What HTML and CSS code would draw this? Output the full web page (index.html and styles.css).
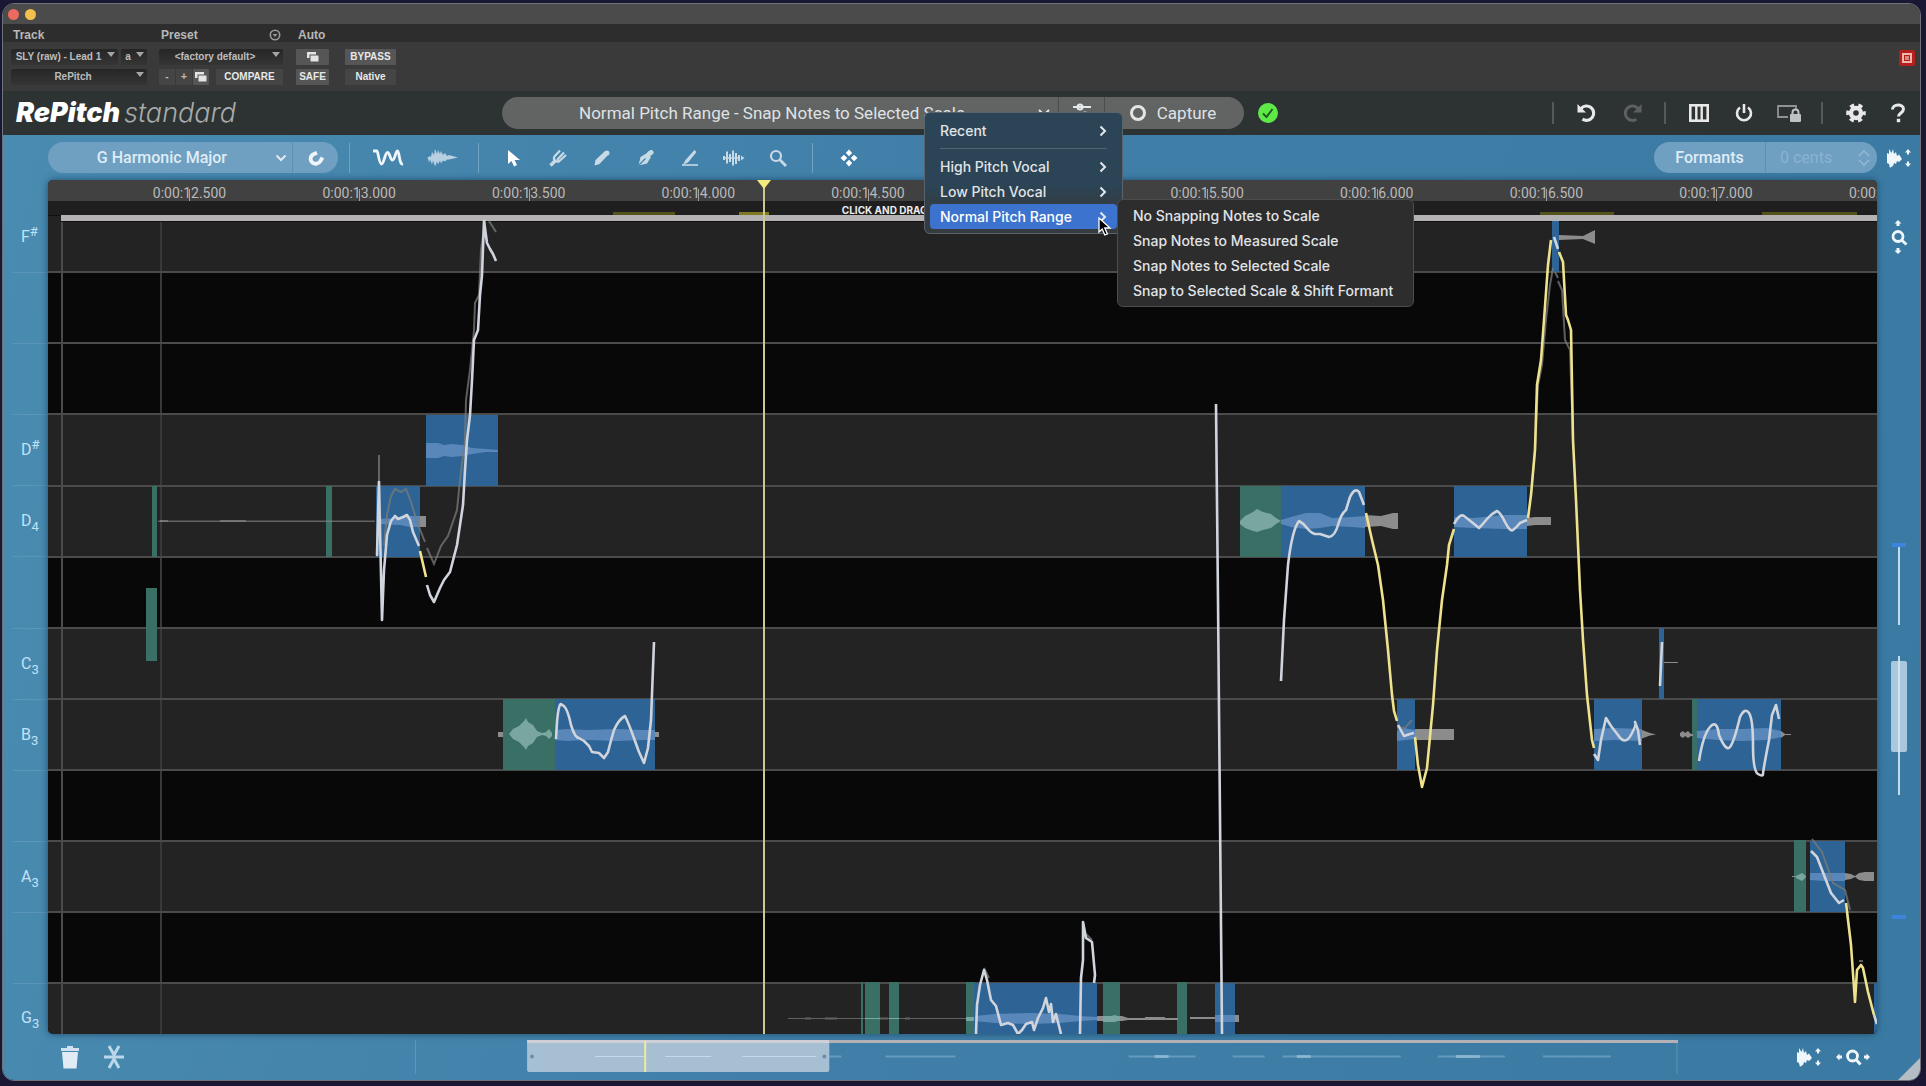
FILE: index.html
```html
<!DOCTYPE html>
<html lang="en">
<head>
<meta charset="utf-8">
<title>RePitch standard</title>
<link rel="stylesheet" href="styles.css">
</head>
<body>
<div class="window">
  <div class="titlebar"><span class="light light-close"></span><span class="light light-min"></span></div>

  <header class="host">
    <section class="host-group host-track">
      <h2>Track</h2>
      <div class="host-row">
        <button class="drop grow">SLY (raw) - Lead 1</button>
        <button class="drop slot">a</button>
      </div>
      <div class="host-row"><button class="drop grow">RePitch</button></div>
    </section>
    <section class="host-group host-preset">
      <h2>Preset
        <svg class="ring" width="12" height="12" viewBox="0 0 12 12"><circle cx="6" cy="6" r="4.7" fill="none" stroke="#9a9a9a" stroke-width="1.6"/><path d="M3.6 5h4.8L6 8z" fill="#9a9a9a"/></svg>
      </h2>
      <div class="host-row"><button class="drop grow">&lt;factory default&gt;</button></div>
      <div class="host-row tight">
        <button class="key">-</button><button class="key">+</button>
        <button class="key lit" aria-label="Copy"><svg width="14" height="12" viewBox="0 0 14 12"><rect x="1" y="1" width="9" height="6" fill="#e4e4e4"/><rect x="4" y="4" width="9" height="7" fill="#e4e4e4" stroke="#555" /></svg></button>
        <button class="key compare">COMPARE</button>
      </div>
    </section>
    <section class="host-group host-auto">
      <h2>Auto</h2>
      <div class="host-row">
        <button class="key lit auto-key" aria-label="Automation"><svg width="14" height="12" viewBox="0 0 14 12"><rect x="1" y="1" width="9" height="6" fill="#e4e4e4"/><rect x="4" y="4" width="9" height="7" fill="#e4e4e4" stroke="#555"/></svg></button>
        <button class="key lit wide-key">BYPASS</button>
      </div>
      <div class="host-row">
        <button class="key lit auto-key">SAFE</button>
        <button class="key wide-key">Native</button>
      </div>
    </section>
    <button class="target" aria-label="Target"><svg width="18" height="18" viewBox="0 0 18 18"><rect x="1" y="1" width="16" height="16" rx="2" fill="#b5201c"/><rect x="4" y="4" width="10" height="10" fill="#f1b5ae"/><rect x="6.500" y="6.500" width="5" height="5" fill="#d9867e" stroke="#b5201c"/></svg></button>
  </header>

  <div class="brandbar">
    <h1 class="logo"><b>RePitch</b> <span>standard</span></h1>
    <div class="preset-pill">
      <button class="preset-name">Normal Pitch Range - Snap Notes to Selected Scale
        <svg class="preset-chev" width="12" height="8" viewBox="0 0 12 8"><path d="M1 1l5 5 5-5" class="ln"/></svg></button>
      <button class="preset-adjust" aria-label="Adjust"><svg width="20" height="20" viewBox="0 0 20 20"><path d="M1 4h18M1 12h18" class="ln"/><circle cx="8" cy="4" r="2.500" fill="#666" class="ln"/><circle cx="13" cy="12" r="2.500" fill="#666" class="ln"/></svg></button>
      <button class="capture"><svg width="18" height="18" viewBox="0 0 18 18"><circle cx="9" cy="9" r="6.500" fill="none" stroke="#e4e4e4" stroke-width="3"/></svg>Capture</button>
    </div>
    <svg class="ok" width="20" height="20" viewBox="0 0 20 20"><circle cx="10" cy="10" r="10" fill="#5fe947"/><path d="M5 10.500l3.500 3.500 6-8" fill="none" stroke="#1d5a22" stroke-width="2"/></svg>
    <div class="brand-tools">
      <span class="bar"></span>
      <button aria-label="Undo"><svg width="22" height="22" viewBox="0 0 22 22"><path d="M5 6.500A7.200 7.200 0 1 1 6.500 17.200" fill="none" stroke="#e8e8e8" stroke-width="3.200"/><path d="M1.500 2v8.500H10z" fill="#e8e8e8"/></svg></button>
      <button aria-label="Redo"><svg width="22" height="22" viewBox="0 0 22 22"><path d="M17 6.500A7.200 7.200 0 1 0 15.500 17.200" fill="none" stroke="#5c6061" stroke-width="3"/><path d="M20.500 2v8.500H12z" fill="#5c6061"/></svg></button>
      <span class="bar"></span>
      <button aria-label="Columns"><svg width="20" height="18" viewBox="0 0 20 18"><rect x="1.300" y="1.300" width="17.400" height="15.400" fill="none" stroke="#e8e8e8" stroke-width="2.600"/><path d="M7.300 1v16M12.700 1v16" stroke="#e8e8e8" stroke-width="2.400"/></svg></button>
      <button aria-label="Power"><svg width="20" height="20" viewBox="0 0 20 20"><path d="M6 4.500A7 7 0 1 0 14 4.500" fill="none" stroke="#e8e8e8" stroke-width="2.600"/><path d="M10 1v9" stroke="#e8e8e8" stroke-width="2.600"/></svg></button>
      <button aria-label="Lock view"><svg width="26" height="20" viewBox="0 0 26 20"><path d="M12 14H2V3h18v4" fill="none" stroke="#8f9394" stroke-width="1.800"/><rect x="14" y="11" width="11" height="8" rx="1" fill="#bfc2c3"/><path d="M16.500 11V9.500a3 3 0 0 1 6 0V11" fill="none" stroke="#bfc2c3" stroke-width="2"/></svg></button>
      <span class="bar"></span>
      <button aria-label="Settings"><svg width="20" height="20" viewBox="0 0 20 20"><circle cx="10" cy="10" r="5" fill="none" stroke="#e8e8e8" stroke-width="4.400"/><circle cx="10" cy="10" r="8" fill="none" stroke="#e8e8e8" stroke-width="3.600" stroke-dasharray="4.200 4.180" stroke-dashoffset="2.100"/></svg></button>
      <button class="help" aria-label="Help"><svg width="16" height="20" viewBox="0 0 16 20"><path d="M2.500 6.500C2.500 0.500 13.500 0.500 13.500 6c0 4-5 3.800-5 7.500" fill="none" stroke="#e8e8e8" stroke-width="3"/><rect x="6.800" y="15.800" width="3.400" height="3.400" fill="#e8e8e8"/></svg></button>
    </div>
  </div>

  <main class="app">
    <div class="toolbar">
      <div class="scale-pill">
        <button class="scale-name"><span>G Harmonic Major</span><svg width="12" height="8" viewBox="0 0 12 8"><path d="M1.500 1.500L6 6l4.500-4.500" class="ln"/></svg></button>
        <button class="magnet" aria-label="Snap"><svg width="18" height="18" viewBox="0 0 18 18"><path d="M10 3.800L6.500 5.300C3 7 2.700 11.500 5.500 13.700c2.600 2 6.200 1 8-1.700L15.500 8.500" fill="none" stroke="#f0f5fa" stroke-width="3.800"/></svg></button>
      </div>
      <div class="views">
        <button aria-label="Pitch view"><svg width="32" height="20" viewBox="0 0 32 20"><path d="M1 3h4c1 0 2 13 4.500 13S13 4.500 15.500 4.500 18 12 20.500 12 23.500 3 25.500 3 27 17 31 16" fill="none" stroke="#f0f5fa" stroke-width="2.800"/></svg></button>
        <button aria-label="Waveform view"><svg class="soft" width="32" height="20" viewBox="0 0 32 20"><path d="M0 10l3-2 1 1 1-5 2 3 1-6 2 5 1-4 2 4 1-3 2 4 2-2 2 3 2-1 9 2.500 -9 2-2 0-2 2-2-1-2 3-1-3-2 4-1-3-2 5-2-6-1 4-2-5-1 3-1-4z" fill="#e6f0f8"/></svg></button>
      </div>
      <div class="tools">
        <button aria-label="Select"><svg width="18" height="20" viewBox="0 0 18 20"><path d="M3 2v14l3.500-3 2.500 5.500 3-1.400-2.400-5.100H15z" fill="#fff"/></svg></button>
        <button aria-label="Tuning fork"><svg class="soft" width="18" height="18" viewBox="0 0 18 18"><path d="M1.500 16.500L6 12" stroke="#fff" stroke-width="3.400"/><path d="M11 1.500L5.500 7.500c-2 3 2 6.500 5 4.500L17 6M8 11l7-7.500" fill="none" stroke="#fff" stroke-width="2.200"/></svg></button>
        <button aria-label="Pencil"><svg class="soft" width="18" height="18" viewBox="0 0 18 18"><path d="M1.500 16.500l1-5.500L12 2l3.500 3.500-9 9.500z" fill="#fff"/><circle cx="14" cy="4" r="2.500" fill="#fff"/></svg></button>
        <button aria-label="Pen"><svg class="soft" width="18" height="18" viewBox="0 0 18 18"><path d="M1.500 16.500L3.500 8 10 4l4 4-4 6.500z" fill="#fff"/><path d="M12.500 4.500l1.500-1" stroke="#fff" stroke-width="5" stroke-linecap="round"/><path d="M1.500 16.500L8.500 9.500" stroke="#4384aa" stroke-width="1.200"/></svg></button>
        <button aria-label="Knife"><svg class="soft" width="18" height="18" viewBox="0 0 18 18"><path d="M13.500 1L4.500 11l-2.500 4.500 5-2L15.500 3z" fill="#fff"/><path d="M1 16h16" stroke="#fff" stroke-width="1.600"/></svg></button>
        <button aria-label="Stretch"><svg class="soft" width="22" height="18" viewBox="0 0 22 18"><path d="M1 7v4M4 2.500v12M7 5v8M10 1.500v15M13 4v11M16 6v6" stroke="#fff" stroke-width="2"/><path d="M1 9h16" stroke="#fff" stroke-width="1.500"/><path d="M18 6.500v5l3.500-2.500z" fill="#fff"/></svg></button>
        <button aria-label="Zoom"><svg class="soft" width="18" height="18" viewBox="0 0 18 18"><circle cx="7" cy="7" r="5" fill="none" stroke="#fff" stroke-width="2.200"/><path d="M10.800 10.800L17 17" stroke="#fff" stroke-width="2.800"/></svg></button>
      </div>
      <div class="tools-extra">
        <button aria-label="Nudge"><svg width="18" height="18" viewBox="0 0 18 18"><path d="M9 0.500L12.200 4 9 7.200 5.800 4zM9 17.500L12.200 14 9 10.800 5.800 14zM0.500 9L4 5.800 7.200 9 4 12.200zM17.500 9L14 5.800 10.800 9 14 12.200z" fill="#fff"/></svg></button>
      </div>
      <div class="formants">
        <button class="form-name">Formants</button>
        <label class="form-value"><input type="text" value="0 cents" aria-label="Formant shift" disabled><svg width="14" height="18" viewBox="0 0 14 18"><path d="M2 7l5-5 5 5M2 11l5 5 5-5" fill="none" stroke="#a9c6dc" stroke-opacity=".6" stroke-width="1.600"/></svg></label>
      </div>
      <button class="wave-zoom" aria-label="Waveform height"><svg width="26" height="20" viewBox="0 0 26 20"><path d="M1 5l2 1 0-5 2.500 4 1.500-4 1 5 2-2 1 4 2-1.500 3 4.500-3 3-2-1-1 3-2-1-1 3-2 1-1 1-1-4-2-1z" fill="#f0f7fc"/><path d="M22 1l3 3.500h-2v2h-2v-2h-2zM22 19l3-3.500h-2v-2h-2v2h-2z" fill="#f0f7fc"/></svg></button>
    </div>

    <div class="workspace">
      <ol class="keys">
        <li class="k-top"><span>F<sup>#</sup></span></li>
        <li></li><li></li>
        <li><span>D<sup>#</sup></span></li>
        <li><span>D<sub>4</sub></span></li>
        <li></li>
        <li><span>C<sub>3</sub></span></li>
        <li><span>B<sub>3</sub></span></li>
        <li></li>
        <li><span>A<sub>3</sub></span></li>
        <li></li>
        <li class="k-end"><span>G<sub>3</sub></span></li>
      </ol>

      <div class="editor">
        <div class="ruler">
          <time>0:00:12.500</time><time>0:00:13.000</time><time>0:00:13.500</time><time>0:00:14.000</time><time>0:00:14.500</time><time></time><time>0:00:15.500</time><time>0:00:16.000</time><time>0:00:16.500</time><time>0:00:17.000</time><time>0:00:17.500</time>
        </div>
        <div class="strip"><span>CLICK AND DRAG</span></div>
        <svg class="roll" viewBox="48 215 1829 819" preserveAspectRatio="none">
          <rect x="48" y="215" width="1829" height="819" fill="#232323"/>
          <g fill="#080808"><rect x="48" y="272" width="1829" height="142"/><rect x="48" y="557" width="1829" height="71"/><rect x="48" y="770" width="1829" height="71"/><rect x="48" y="912" width="1829" height="71"/></g>
          <path d="M161 221V1034" stroke="#393939" stroke-width="2"/>
          <path d="M48 272H1877M48 343H1877M48 414H1877M48 486H1877M48 557H1877M48 628H1877M48 699H1877M48 770H1877M48 841H1877M48 912H1877M48 983H1877" stroke="#4b4b4b" stroke-width="2"/>
          <path d="M62 221V1034" stroke="#4b4b4b" stroke-width="2"/>
          <path d="M48 215.500H62" stroke="#111" stroke-width="1"/>
          <rect x="61" y="214" width="1816" height="8" fill="#101010"/>
          <rect x="61" y="215" width="1816" height="6" fill="#b4b2b3"/>

          <g fill="#3a6f66">
            <rect x="152" y="486" width="5" height="71"/><rect x="326" y="486" width="6" height="71"/><rect x="146" y="588" width="11" height="73"/>
            <rect x="503" y="699" width="52" height="71"/><rect x="861" y="982" width="2" height="52"/><rect x="865" y="982" width="15" height="52"/><rect x="889" y="982" width="10" height="52"/><rect x="966" y="982" width="9" height="52"/><rect x="1103" y="982" width="17" height="52"/><rect x="1177" y="982" width="10" height="52"/>
            <rect x="1240" y="486" width="41" height="71"/><rect x="1692" y="699" width="5" height="71"/><rect x="1794" y="840" width="12" height="72"/>
          </g>
          <g fill="#2d6495">
            <rect x="376" y="486" width="44" height="71"/><rect x="426" y="415" width="72" height="71"/><rect x="555" y="699" width="100" height="71"/><rect x="974" y="983" width="123" height="51"/><rect x="1215" y="983" width="20" height="51"/>
            <rect x="1281" y="486" width="84" height="71"/><rect x="1454" y="486" width="73" height="71"/><rect x="1397" y="699" width="18" height="71"/><rect x="1594" y="699" width="48" height="71"/><rect x="1552" y="221" width="7" height="51"/><rect x="1659" y="628" width="5" height="71"/><rect x="1697" y="699" width="84" height="71"/><rect x="1810" y="841" width="35" height="71"/><rect x="1874" y="983" width="3" height="51"/>
          </g>

          <g fill="#8c8c8c">
            <path d="M158 520.500H375v1.500H158z" opacity=".6"/><path d="M160 520h8v2h-8zM220 520h26v2h-26z" opacity=".6"/>
            <path d="M420 516h6v11h-6zM498 732h5v5h-5zM655 732h4v5h-4z"/>
            <path d="M788 1018H974v1H788zM805 1017.500h6v2h-6zM825 1017.500h12v2h-12zM878 1017.500h10v2h-10zM905 1017.500h5v2h-5z" opacity=".6"/>
            <path d="M1097 1016h25l6 2h50v2h-50l-6 1h-25zM1145 1017h20v3h-20zM1190 1017h25v2h-25zM1235 1015h4v7h-4z"/>
            <path d="M1365 515l16 1 12-3h5v16h-5l-12-3-16 1zM1527 518l8-1h16v8h-16l-8 1zM1415 729h39v11h-39zM1559 235l24 1 12-6v14l-12-5-24 1zM1642 730l8 3 6 1.500-6 1-8 3zM1664 662h14v1h-14zM1680 733l3-2 2 2 3-2 3 3h2v2h-2l-3 2-3-2-2 2-3-2zM1781 731l4 3h6v1h-6l-4 3zM1792 876h4v1h-4zM1845 873l6 1 4 2 4-3 6-1h9v9h-9l-6-1-4-3-4 2-6 1z"/>
          </g>
          <g fill="#79a69f">
            <path d="M503 734h6l4-5 6-3 5-5 2-3 2 4 5 3 4 6 5 2 4-1 3-3 3 4v3l-3 3-3-3-4-1-5 2-4 6-5 3-2 4-2-3-5-5-6-3-4-5h-6z"/>
            <path d="M1240 521l5-5 8-4 4-3 6 3 8 2 5 4 5 3-5 3-5 4-8 2-6 2-4-1-8-3-5-4z"/>
            <path d="M1103 1016h8l4-1 5 2v3l-5 2h-12zM966 1017h8v4h-8zM865 1018h15v1h-15zM889 1018h10v1h-10zM1796 876l6-3 4 3v1l-4 4-6-3z"/>
          </g>
          <g fill="#5a87b9">
            <path d="M378 519l22-1 10-2h10v11h-10l-10-2-22-1z"/>
            <path d="M426 443h12l6 2 8-1 10 1 10 3 14 1 12 1v2l-12 0-14 2-10 2-10 1-8-1-6 2h-12z"/>
            <path d="M555 730l12-1 20 1 30-1 25 1h13v10h-13l-25 1-30-1-20 1-12-1z"/>
            <path d="M975 1016l20-2 35-1 30 1 20 2 17 1v3l-17 1-20 2-30 1-35-1-20-2zM1215 1015h20v7h-20z"/>
            <path d="M1281 520l10-3 15-4h14l12 5 20-1 13-1v12l-13-1-20-1-12 2-14 1-15-2-10-3z"/>
            <path d="M1454 517l20 1 30-3h23v14h-23l-30-1-20-1zM1397 731l6-3 12 2v9l-18 2zM1594 729l20-1 28 1v12l-28-1-20 1zM1697 731l20-2 25 0 25-1 14 3v6l-14 3-25 1-25-1-20-2zM1810 873l14 0 21 0v8h-21l-14-1z"/>
          </g>

          <g class="ghost">
            <path d="M379 455V482M384 545L387 515 391 496 395 489 401 492 406 489 411 502 417 522 425 542M427 548L434 564 441 546 448 536 457 510 460 480 465 440 466 400 470 370 474 330 475 303 479 295 481 250 485 221M489 221L496 232"/>
            <path d="M1531 495L1535 450 1538 385 1542 365 1546 320 1550 285 1553 268M1555 272L1558 278M1558 281L1562 290 1565 340 1570 350 1573 440M1397 727L1405 728 1412 720M1812 839L1822 852 1833 883 1845 890 1850 910M1859 961h4M984 968L989 978M1086 934L1092 940"/>
          </g>
          <g class="pitch">
            <path d="M379 481L377 555 379 482 382 620 384 570 387 535 391 521 395 516 398 519 403 517 407 515 410 520 413 532 416 539 419 546"/>
            <path d="M427 585L430 595 434 602 440 588 444 580 450 572 457 545 460 525 463 505 465 470 467 440 470 415 472 380 474 340 478 330 480 295 482 275 484 221 487 243 490 249 493 254 496 261"/>
            <path d="M556 739L557 722Q559 700 562 705Q567 706 571 725Q575 738 579 738L584 741 589 746 592 752 599 753 604 758 608 752Q611 740 614 730Q619 719 625 716Q629 724 635 741L639 752 644 763 648 748 651 720 654 642"/>
            <path d="M976 1034L977 1005 980 985 984 970 987 980 991 1000 996 1006 1001 1025 1008 1023 1013 1025 1018 1034 1022 1030 1026 1024 1032 1022 1034 1030 1038 1018 1043 1008 1046 998 1049 1012 1051 1004 1053 1022 1056 1014 1061 1034M1080 1034L1081 978 1083 960 1083 922 1086 938 1092 942 1095 975 1094 983"/>
            <path d="M1216 404L1218 600 1222 1034"/>
            <path d="M1281 681L1284 620 1288 565Q1292 530 1299 521Q1303 523 1307 528T1315 534L1320 534 1329 537Q1335 536 1338 525T1346 510L1350 497Q1355 487 1359 492L1364 505"/>
            <path d="M1398 725L1404 736 1410 734 1414 733M1454 524Q1460 513 1464 516T1479 528Q1483 524 1487 519T1497 511Q1500 512 1505 522T1513 530 1520 523L1527 520M1554 237L1558 249"/>
            <path d="M1594 754L1598 760 1601 740 1606 718 1611 726 1618 735Q1625 746 1631 735T1635 722L1638 730 1640 745M1662 642L1660 686"/>
            <path d="M1699 761Q1703 735 1710 727T1719 735Q1726 752 1730 747T1740 717Q1745 707 1749 713T1753 745 1758 774 1763 774 1769 740L1772 715 1776 705 1779 719"/>
            <path d="M1811 851L1817 857 1824 875 1831 893 1839 903 1844 900M1874 1015L1877 1024"/>
          </g>
          <g class="glide">
            <path d="M420 551L426 577M1366 513L1372 540 1378 565 1383 600 1388 650 1392 695 1394 711 1397 721M1415 737L1418 765 1422 787 1427 768 1433 705 1437 650 1442 600 1447 565 1449 545 1454 529M1528 518L1531 495 1535 450 1537 385 1541 360 1544 320 1548 265 1551 240M1559 252L1563 262 1566 315 1568 320 1571 330 1573 440 1576 500 1580 590 1583 640 1587 695 1592 740 1594 748M1846 903L1851 945 1855 1002 1857 970 1861 965 1863 968 1868 992 1874 1015"/>
          </g>
        </svg>
        <div class="playhead"></div>
      </div>

      <aside class="side">
        <button class="side-zoom" aria-label="Vertical zoom"><svg width="18" height="34" viewBox="0 0 18 34"><path d="M8 0l3.500 3.500h-2V6h-3V3.500h-2zM8 34l3.500-3.500h-2V28h-3v2.500h-2z" fill="#f0f7fc"/><circle cx="8" cy="16.500" r="5" fill="none" stroke="#f0f7fc" stroke-width="2.800"/><path d="M11.500 20l5 4.500" stroke="#f0f7fc" stroke-width="3"/></svg></button>
        <div class="track-a"></div>
        <div class="track-b"><span></span></div>
        <div class="mark"></div>
      </aside>
    </div>

    <footer class="bottom">
      <div class="bottom-left">
        <button aria-label="Delete"><svg width="20" height="24" viewBox="0 0 20 24"><path d="M7 1h6v2h6v3H1V3h6z" fill="#d3e2f0"/><path d="M2 7h16l-1.500 16.500h-13z" fill="#e1ebf6"/></svg></button>
        <button aria-label="Split"><svg width="20" height="24" viewBox="0 0 20 24"><path d="M0 12h20" stroke="#bcd6ea" stroke-width="3"/><path d="M5 1l5 9 5-9M5 23l5-9 5 9" fill="none" stroke="#bcd6ea" stroke-width="3"/></svg></button>
      </div>
      <div class="overview">
        <svg viewBox="415 1041 1262 34" preserveAspectRatio="none">
          <path d="M415.500 1041v34M1676 1041v34" stroke="#6ea2c2" stroke-opacity=".6"/>
          <rect x="829" y="1041" width="848" height="3" fill="#b3b1b6"/>
          <path d="M829 1057.500h12M885 1057.500h70M1128 1057.500h67M1232 1057.500h32M1282 1057.500h118M1437 1057.500h67M1542 1057.500h68" stroke="#7fadcb" stroke-opacity=".6" stroke-width="2"/>
          <path d="M1154 1057.500h14M1296 1057.500h14M1455 1057.500h24" stroke="#a8cbe0" stroke-opacity=".6" stroke-width="3"/>
          <rect x="527" y="1041" width="302" height="32" rx="2" fill="#a6bfd3"/><rect x="527" y="1041" width="302" height="3" fill="#d0ced6"/>
          <path d="M595 1057.500h50M665 1057.500h46M742 1057.500h74" stroke="#c6d9e8" stroke-width="1"/>
          <path d="M645 1042v31" stroke="#f2e99a" stroke-width="2"/>
          <circle cx="532" cy="1057.500" r="2" fill="#6d8da8"/><circle cx="824" cy="1057.500" r="2" fill="#6d8da8"/>
        </svg>
      </div>
      <div class="bottom-right">
        <button aria-label="Waveform height"><svg width="26" height="20" viewBox="0 0 26 20"><path d="M1 5l2 1 0-5 2.500 4 1.500-4 1 5 2-2 1 4 2-1.500 3 4.500-3 3-2-1-1 3-2-1-1 3-2 1-1 1-1-4-2-1z" fill="#f0f7fc"/><path d="M22 1l3 3.500h-2v2h-2v-2h-2zM22 19l3-3.500h-2v-2h-2v2h-2z" fill="#f0f7fc"/></svg></button>
        <button aria-label="Horizontal zoom"><svg width="34" height="18" viewBox="0 0 34 18"><path d="M0 9l3.500-3.500v2H6v3H3.500v2zM34 9l-3.500-3.500v2H28v3h2.500v2z" fill="#f0f7fc"/><circle cx="16.500" cy="8" r="5" fill="none" stroke="#f0f7fc" stroke-width="2.800"/><path d="M20 11.500l4.500 5" stroke="#f0f7fc" stroke-width="3"/></svg></button>
      </div>
      <svg class="grip" width="22" height="22" viewBox="0 0 22 22"><path d="M22 0v22H0z" fill="#b4bcc4"/></svg>
    </footer>
  </main>

  <div class="menus">
    <div class="menu" role="menu">
      <button class="item" role="menuitem">Recent<svg width="8" height="12" viewBox="0 0 8 12"><path d="M1.500 1.500L6 6l-4.500 4.500" class="ln"/></svg></button>
      <hr>
      <button class="item" role="menuitem">High Pitch Vocal<svg width="8" height="12" viewBox="0 0 8 12"><path d="M1.500 1.500L6 6l-4.500 4.500" class="ln"/></svg></button>
      <button class="item" role="menuitem">Low Pitch Vocal<svg width="8" height="12" viewBox="0 0 8 12"><path d="M1.500 1.500L6 6l-4.500 4.500" class="ln"/></svg></button>
      <button class="item current" role="menuitem">Normal Pitch Range<svg width="8" height="12" viewBox="0 0 8 12"><path d="M1.500 1.500L6 6l-4.500 4.500" class="ln"/></svg></button>
    </div>
    <div class="menu submenu" role="menu">
      <button class="item" role="menuitem">No Snapping Notes to Scale</button>
      <button class="item" role="menuitem">Snap Notes to Measured Scale</button>
      <button class="item" role="menuitem">Snap Notes to Selected Scale</button>
      <button class="item" role="menuitem">Snap to Selected Scale &amp; Shift Formant</button>
    </div>
    <svg class="pointer" width="14" height="20" viewBox="0 0 14 20"><path d="M1 1v14l3.200-3 2.600 6 2.600-1.100-2.600-5.900H12z" fill="#000" stroke="#fff" stroke-width="1.300"/></svg>
  </div>
</div>
</body>
</html>
```
FILE: styles.css
```css
* { box-sizing: border-box; }
html, body { height: 100%; }
body {
  margin: 0;
  padding: 3px 5px 5px 2px;
  background: #1a1735;
  font-family: Roboto, "Liberation Sans", sans-serif;
  color: #dcdcdc;
}
button { margin: 0; padding: 0; border: 0; background: none; color: inherit; font: inherit; }
svg { display: block; flex: none; }
.ln { stroke: #e4e9ee; stroke-width: 2; fill: none; }
h1, h2, ol { margin: 0; padding: 0; font-weight: inherit; list-style: none; }

.window {
  position: relative;
  display: flex;
  flex-direction: column;
  min-height: 100%;
  border: 1px solid #6d757b;
  border-radius: 12px;
  overflow: hidden;
}
.titlebar { display: flex; align-items: center; gap: 6px; height: 20px; padding-left: 5px; background: #4b4b4b; }
.light { width: 11px; height: 11px; border-radius: 50%; }
.light-close { background: #ec6a5e; }
.light-min { background: #f4bf4f; }

/* Host plug-in header */
.host {
  display: flex;
  height: 67px;
  padding: 0 4px 0 8px;
  background: linear-gradient(#2d2d2d 18px, #3a3a3a 18px);
  font: bold 10px/16px "Liberation Sans", sans-serif;
  color: #bdbdbd;
}
.host-group { display: flex; flex-direction: column; gap: 4px; }
.host h2 { display: flex; justify-content: space-between; align-items: center; height: 18px; margin-bottom: 3px; padding: 3px 2px 0; font: bold 12px/16px "Liberation Sans", sans-serif; color: #b8b8b8; }
.host-track { width: 142px; padding-right: 6px; }
.host-preset { width: 135px; padding: 0 5px 0 6px; }
.host-auto { padding-left: 8px; }
.host-row { display: flex; gap: 3px; height: 16px; }
.host-row.tight { gap: 1px; }
.host-auto .host-row { gap: 16px; }
.drop { position: relative; padding-right: 12px; background: linear-gradient(#262626, #353535); border-radius: 2px; line-height: 16px; }
.drop::after { content: ""; position: absolute; right: 3px; top: 3px; border: 4px solid transparent; border-top: 5px solid #a5a5a5; border-bottom: 0; }
.grow { flex: 1; }
.slot { width: 26px; }
.key { display: flex; align-items: center; justify-content: center; min-width: 16px; height: 16px; background: #454545; border-radius: 1px; }
.key.lit { background: #565656; color: #e8e8e8; }
.compare { flex: 1; margin-left: 6px; color: #e8e8e8; }
.auto-key { width: 33px; }
.wide-key { width: 51px; color: #e8e8e8; }
.target { align-self: center; margin-left: auto; }

/* Brand bar */
.brandbar { display: flex; align-items: center; height: 44px; background: #2d3232; }
.logo { display: flex; gap: 4px; width: 499px; padding-left: 13px; font: italic 300 27px/32px Inter, sans-serif; color: #a7abab; }
.logo b { font-weight: 900; color: #fff; }
.preset-pill { display: flex; width: 742px; height: 32px; border-radius: 16px; overflow: hidden; background: #626464; font-size: 17px; color: #dfe2e4; }
.preset-pill button { display: flex; align-items: center; justify-content: center; border-left: 1px solid #4c4e4e; }
.preset-pill .preset-name { position: relative; flex: 1; border: 0; padding-right: 16px; }
.preset-chev { position: absolute; right: 8px; }
.preset-adjust { width: 46px; }
.capture { width: 140px; gap: 10px; padding-right: 4px; }
.ok { margin-left: 14px; }
.brand-tools { display: flex; align-items: center; margin-left: auto; padding-right: 2px; }
.brand-tools button { display: flex; justify-content: center; width: 45px; }
.brand-tools .bar { width: 2px; height: 22px; margin: 0 10px; background: #55595a; }
.brand-tools .help { width: 40px; }

/* Blue application area */
.app {
  display: flex;
  flex: 1;
  flex-direction: column;
  background: linear-gradient(100deg, #498bb1, #417fa8 45%, #3a7aa2);
}
.toolbar { display: flex; align-items: center; height: 45px; padding-left: 45px; }
.toolbar button { display: flex; flex: none; align-items: center; justify-content: center; }
.soft { opacity: .7; }
.scale-pill, .formants { display: flex; height: 31px; border-radius: 16px; overflow: hidden; background: #6fa0c2; font-size: 16px; color: #dfecf6; }
.scale-pill { width: 290px; }
.scale-pill .scale-name { flex: 1; justify-content: flex-end; gap: 48px; padding-right: 5px; font-weight: 500; }
.scale-pill .magnet { width: 46px; border-left: 1px solid #5c90b4; }
.views { display: flex; align-items: center; height: 30px; margin-left: 11px; padding-left: 10px; border-left: 1px solid #6fa3c4; }
.views button { width: 55px; }
.tools { display: flex; align-items: center; height: 30px; margin-left: 8px; padding-left: 13px; padding-right: 12px; border-left: 1px solid #6fa3c4; }
.tools button { width: 44px; }
.tools-extra { display: flex; align-items: center; height: 30px; padding-left: 27px; border-left: 1px solid #6fa3c4; }
.formants { width: 223px; margin-left: auto; }
.form-name { width: 111px; font-weight: 500; }
.form-value { display: flex; flex: 1; align-items: center; min-width: 0; padding: 0 6px 0 14px; border-left: 1px solid #5c90b4; }
.form-value input { flex: 1; width: 100%; min-width: 0; padding: 0; border: 0; background: none; font: inherit; color: #8cb3d0; }
.wave-zoom { width: 43px; }

/* Piano roll */
.workspace { display: grid; grid-template-columns: 45px minmax(0, 1fr) 43px; flex: 1; }
.keys { display: grid; grid-template-rows: 51fr repeat(10, 71fr) 51fr; padding: 41px 0 0 10px; color: #c0e2f6; font-size: 16px; line-height: 24px; }
.keys li { display: flex; align-items: center; min-height: 0; padding-left: 8px; border-top: 1px solid #5b95b7; }
.keys .k-top { align-items: flex-start; border: 0; padding-top: 4px; }
.keys .k-end { align-items: flex-end; padding-bottom: 4px; }
.keys sup, .keys sub { font-size: 13px; line-height: 0; }
.keys sup { vertical-align: 6px; }
.keys sub { vertical-align: -5px; }

.editor { position: relative; display: flex; flex-direction: column; min-width: 0; border-radius: 5px; overflow: hidden; background: #1f1f1f; box-shadow: 0 0 7px #1d4d6c; }
.ruler { display: flex; height: 21px; padding-left: 3.1%; overflow: hidden; background: #414141; font-size: 14px; line-height: 26px; color: #b9b9b9; }
.ruler time { position: relative; flex: 0 0 9.57%; text-align: center; }
.ruler time::after { content: ""; position: absolute; left: 50%; top: 9px; width: 1px; height: 12px; background: #a0a0a0; }
.strip { height: 14px; padding-left: 43.4%; font: bold 10px/18px Inter, sans-serif; color: #ececec; white-space: nowrap; background: linear-gradient(90deg, transparent 30.9%, #55531c 30.9% 34.3%, transparent 34.3% 37.8%, #7d7a22 37.8% 39.4%, transparent 39.4% 81.6%, #55531c 81.6% 85.6%, transparent 85.6% 93.7%, #55531c 93.7% 98.9%, transparent 98.9%) 0 100% / 100% 3px no-repeat; }
.roll { flex: 1; width: 100%; min-height: 400px; }
.ghost path { fill: none; stroke: #7b7b7b; stroke-opacity: .75; stroke-width: 2; }
.pitch path { fill: none; stroke: #d0d4dc; stroke-width: 2.600; stroke-linejoin: round; }
.glide path { fill: none; stroke: #eee28e; stroke-width: 2.600; stroke-linejoin: round; }
.playhead { position: absolute; top: 0; bottom: 0; left: 39.1%; width: 2px; background: #cdc98c; }
.playhead::before { content: ""; position: absolute; left: -6px; top: 0; border: 7px solid transparent; border-top: 9px solid #f7ea7c; border-bottom: 0; }

.side { display: flex; flex-direction: column; align-items: center; }
.side-zoom { margin-top: 40px; }
.track-a { width: 2px; height: 82px; margin-top: 289px; background: #c3dced; position: relative; }
.track-a::before { content: ""; position: absolute; left: -6px; top: 0; width: 14px; height: 4px; background: #3d85dc; }
.track-b { display: flex; justify-content: center; align-items: flex-start; width: 2px; height: 139px; margin-top: 31px; background: #c3dced; }
.track-b span { flex: none; width: 16px; height: 91px; margin-top: 5px; border-radius: 2px; background: linear-gradient(90deg, #a9c8de 7px, #d3e4f1 7px, #d3e4f1 9px, #a9c8de 9px); }
.mark { width: 14px; height: 4px; margin-top: 120px; background: #3d85dc; }

.bottom { position: relative; display: flex; align-items: center; height: 46px; padding: 0 48px 0 45px; }
.bottom button { display: flex; }
.bottom-left { display: flex; gap: 24px; width: 367px; padding-left: 12px; }
.overview { flex: 1; height: 34px; }
.overview svg { width: 100%; height: 34px; }
.bottom-right { display: flex; align-items: center; justify-content: flex-end; gap: 14px; width: 194px; padding-right: 2px; }
.grip { position: absolute; right: 0; bottom: 0; }

/* Open preset menu */
.menus { position: absolute; left: 921px; top: 108px; display: flex; align-items: flex-start; font: 500 14px/24px Inter, sans-serif; color: #e1e4e7; }
.menu { width: 199px; padding: 5px 5px 4px; border: 1px solid #5a6369; border-radius: 6px; background: linear-gradient(#2b4456 60%, #363b3f 82%); }
.menu hr { height: 1px; margin: 5px 10px; border: 0; background: #4f6676; }
.item { display: flex; align-items: center; justify-content: space-between; width: 100%; height: 25px; padding: 0 10px; border-radius: 4px; white-space: nowrap; }
.item.current { background: #3b73ce; color: #fff; }
.submenu { width: 297px; margin: 87px 0 0 -6px; padding: 3px 5px; background: #2d2d2e; border-color: #4c4c4c; }
.pointer { position: absolute; left: 174px; top: 105px; }
```
